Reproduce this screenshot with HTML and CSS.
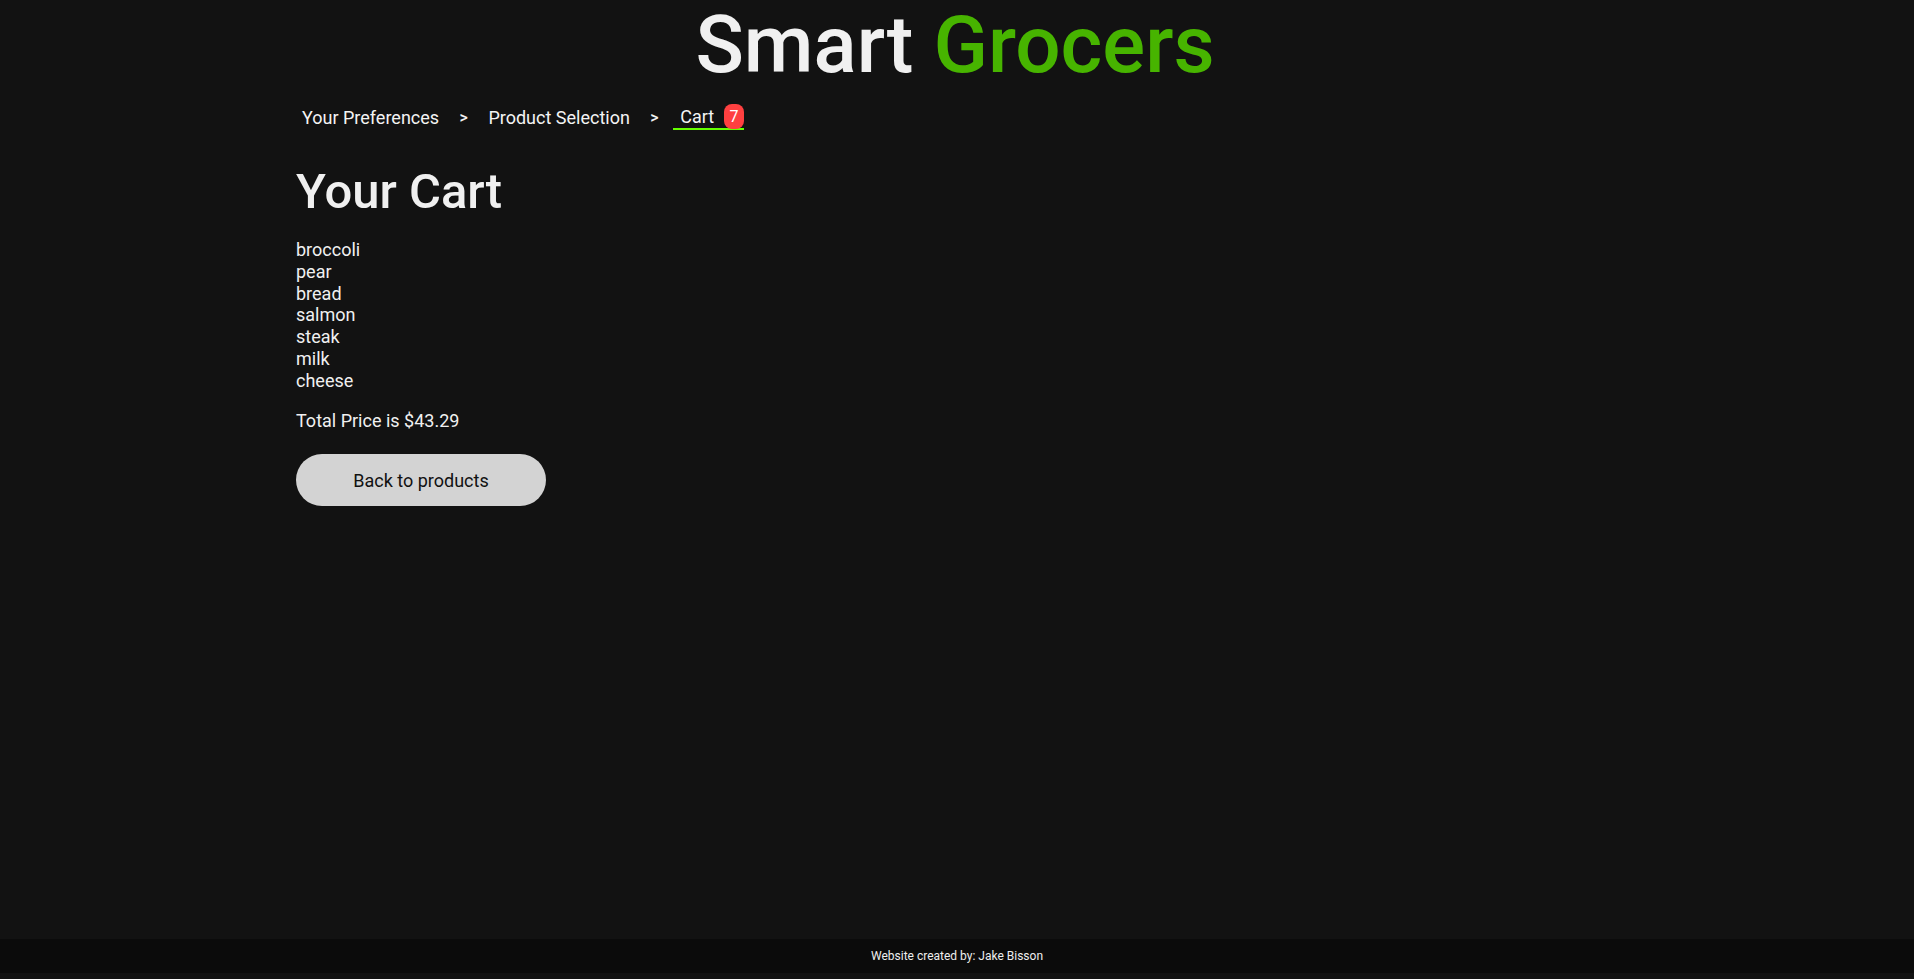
FILE: index.html
```html
<!DOCTYPE html>
<html lang="en">
<head>
<meta charset="utf-8">
<title>Smart Grocers - Cart</title>
<link rel="stylesheet" href="styles.css">
</head>
<body>
<div class="page">
  <header class="site-header">
    <h1 class="brand"><span class="brand-smart">Smart</span> <span class="brand-grocers">Grocers</span></h1>
  </header>
  <main class="container">
    <nav class="crumbs">
      <a class="crumb" href="#">Your Preferences</a>
      <span class="sep">&gt;</span>
      <a class="crumb" href="#">Product Selection</a>
      <span class="sep">&gt;</span>
      <a class="crumb crumb-active" href="#">Cart<span class="badge">7</span></a>
    </nav>
    <h2 class="cart-title">Your Cart</h2>
    <ul class="cart-list">
      <li>broccoli</li>
      <li>pear</li>
      <li>bread</li>
      <li>salmon</li>
      <li>steak</li>
      <li>milk</li>
      <li>cheese</li>
    </ul>
    <p class="total">Total Price is $43.29</p>
    <button class="back-btn" type="button">Back to products</button>
  </main>
  <footer class="site-footer">Website created by: Jake Bisson</footer>
</div>
</body>
</html>
```

FILE: styles.css
```css
* { box-sizing: border-box; }
html, body { margin: 0; padding: 0; }
body {
  background: #121212;
  color: #f0f0f0;
  font-family: Roboto, "Noto Sans", "Liberation Sans", sans-serif;
}
.page {
  min-height: 100vh;
  display: flex;
  flex-direction: column;
  padding-bottom: 6px;
}
.site-header { text-align: center; padding-top: 5px; padding-right: 4px; }
.brand {
  margin: 0;
  font-size: 80px;
  line-height: 80px;
  font-weight: 500;
  letter-spacing: 0;
}
.brand-smart { color: #f0f0f0; }
.brand-grocers { color: #47b400; }
.container {
  width: 1322px;
  margin: 0 auto;
  flex: 1;
}
.crumbs {
  display: flex;
  align-items: center;
  gap: 14.5px;
  margin-top: 19px;
  font-size: 18px;
  height: 26px;
}
.crumb {
  color: #f4f4f4;
  text-decoration: none;
  padding: 0 6px;
  line-height: 21px;
}
.sep { color: #f4f4f4; font-size: 16px; font-weight: 500; }
.crumb-active {
  display: inline-flex;
  align-items: center;
  padding: 0 0 0 7px;
  border-bottom: 2px solid #66ff00;
  height: 26px;
}
.badge {
  display: inline-flex;
  align-items: center;
  justify-content: center;
  margin-left: 10px;
  width: 20px;
  height: 25px;
  border-radius: 8px;
  background: #ff4040;
  color: #fff;
  font-size: 16px;
}
.cart-title {
  margin: 33px 0 0;
  font-size: 49px;
  font-weight: 500;
  line-height: 58px;
}
.cart-list {
  list-style: none;
  margin: 18px 0 0;
  padding: 0;
  font-size: 18px;
  line-height: 21.8px;
}
.total {
  margin: 18px 0 0;
  font-size: 18px;
  line-height: 21.8px;
}
.back-btn {
  display: block;
  margin-top: 23px;
  width: 250px;
  height: 52px;
  border: none;
  border-radius: 26px;
  background: #d3d3d3;
  color: #111;
  font-family: inherit;
  font-size: 18px;
}
.site-footer {
  height: 34px;
  background: #0b0b0b;
  color: #eee;
  font-size: 12px;
  display: flex;
  align-items: center;
  justify-content: center;
}
```
